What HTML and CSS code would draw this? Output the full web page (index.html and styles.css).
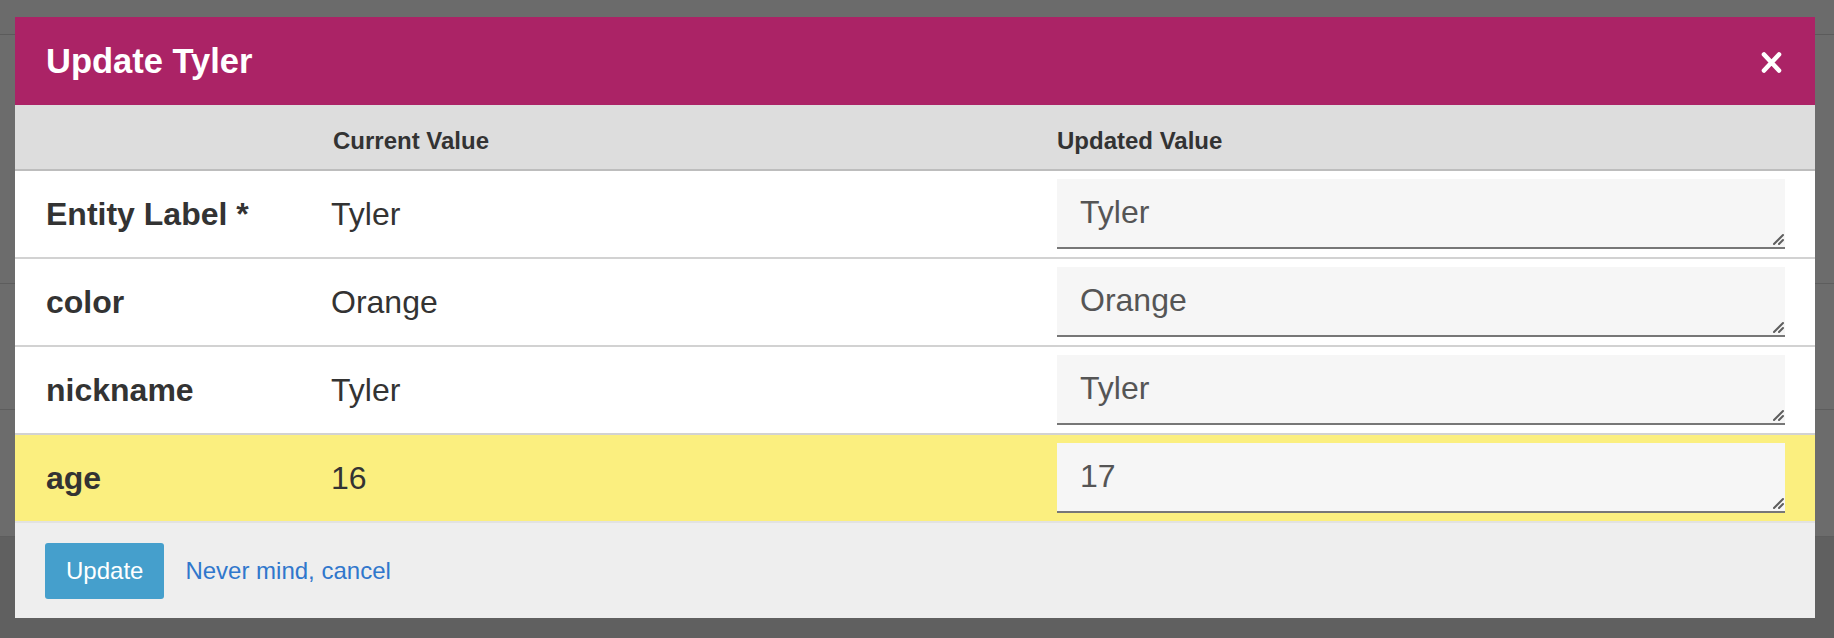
FILE: index.html
```html
<!DOCTYPE html>
<html lang="en">
<head>
<meta charset="utf-8">
<title>Update Tyler</title>
<link rel="stylesheet" href="styles.css">
</head>
<body>
<div class="page">
  <div class="page-top"></div>
  <div class="page-block b1"></div>
  <div class="page-block b2"></div>
  <div class="page-block b3"></div>
  <div class="page-foot"></div>
</div>
<div class="overlay">
  <div class="modal">
    <header class="modal-head">
      <h2 class="modal-title">Update Tyler</h2>
      <button class="close" aria-label="Close">
        <svg width="21" height="23" viewBox="0 0 21 23"><path d="M3 3.5 L18 19.5 M18 3.5 L3 19.5" stroke="#fff" stroke-width="4.6" stroke-linecap="round" fill="none"/></svg>
      </button>
    </header>
    <div class="grid thead">
      <span></span>
      <span>Current Value</span>
      <span>Updated Value</span>
    </div>
    <div class="grid row">
      <span class="label">Entity Label *</span>
      <span class="val">Tyler</span>
      <div class="field-wrap">
        <textarea class="field">Tyler</textarea>
        <svg class="grip" width="13" height="13" viewBox="0 0 13 13"><path d="M12 3 L3 12 M12 8 L8 12" stroke="#5e5e5e" stroke-width="2" stroke-linecap="round"/></svg>
      </div>
    </div>
    <div class="grid row">
      <span class="label">color</span>
      <span class="val">Orange</span>
      <div class="field-wrap">
        <textarea class="field">Orange</textarea>
        <svg class="grip" width="13" height="13" viewBox="0 0 13 13"><path d="M12 3 L3 12 M12 8 L8 12" stroke="#5e5e5e" stroke-width="2" stroke-linecap="round"/></svg>
      </div>
    </div>
    <div class="grid row">
      <span class="label">nickname</span>
      <span class="val">Tyler</span>
      <div class="field-wrap">
        <textarea class="field">Tyler</textarea>
        <svg class="grip" width="13" height="13" viewBox="0 0 13 13"><path d="M12 3 L3 12 M12 8 L8 12" stroke="#5e5e5e" stroke-width="2" stroke-linecap="round"/></svg>
      </div>
    </div>
    <div class="grid row changed">
      <span class="label">age</span>
      <span class="val">16</span>
      <div class="field-wrap">
        <textarea class="field">17</textarea>
        <svg class="grip" width="13" height="13" viewBox="0 0 13 13"><path d="M12 3 L3 12 M12 8 L8 12" stroke="#5e5e5e" stroke-width="2" stroke-linecap="round"/></svg>
      </div>
    </div>
    <footer class="modal-foot">
      <button class="btn">Update</button>
      <a class="cancel" href="#">Never mind, cancel</a>
    </footer>
  </div>
</div>
</body>
</html>
```

FILE: styles.css
```css
html, body {
  margin: 0;
  padding: 0;
  height: 100%;
  overflow: hidden;
}
body {
  font-family: "Liberation Sans", Arial, Helvetica, sans-serif;
  background: #ffffff;
}

/* underlying page (dimmed) */
.page {
  display: flex;
  flex-direction: column;
  height: 100%;
}
.page-top {
  height: 34px;
  background: #fdfdfd;
  border-bottom: 1px solid #d8d8d8;
}
.page-block {
  border-bottom: 1px solid #dcdcdc;
}
.b1 { height: 248px; }
.b2 { height: 125px; }
.b3 { height: 126px; }
.page-foot {
  flex: 1;
  background: #e2e2e2;
}

.overlay {
  position: fixed;
  inset: 0;
  background: rgba(0, 0, 0, 0.575);
}

.modal {
  position: absolute;
  left: 15px;
  top: 17px;
  width: 1800px;
  background: #ffffff;
}

.modal-head {
  height: 88px;
  box-sizing: border-box;
  padding: 0 33px 0 31px;
  background: #ab2366;
  display: flex;
  align-items: center;
  justify-content: space-between;
}
.modal-title {
  margin: 0;
  color: #ffffff;
  font-size: 34.5px;
  font-weight: bold;
}
.close {
  border: 0;
  background: transparent;
  padding: 0;
  display: flex;
  margin-top: 2px;
}

.grid {
  display: grid;
  grid-template-columns: 285px 726px 1fr;
  padding: 0 30px 0 31px;
  align-items: center;
}

.thead {
  height: 64px;
  background: #dddddd;
  border-bottom: 2px solid #bdbdbd;
  font-size: 24px;
  font-weight: bold;
  color: #333333;
}
.thead span {
  padding-top: 8px;
}
.thead span:nth-child(2) {
  padding-left: 2px;
}

.row {
  padding-top: 8px;
  padding-bottom: 8px;
  border-bottom: 2px solid #d2d2d2;
  color: #333333;
  font-size: 32px;
}
.row.changed {
  background: #fbef7f;
  border-bottom-color: #e2e2e2;
}
.label {
  font-weight: bold;
}

.field-wrap {
  position: relative;
}
.field {
  display: block;
  width: 100%;
  height: 70px;
  box-sizing: border-box;
  margin: 0;
  border: 0;
  border-bottom: 2px solid #777777;
  border-radius: 0;
  background: #f6f6f6;
  color: #555555;
  font-family: "Liberation Sans", Arial, Helvetica, sans-serif;
  font-size: 32px;
  line-height: 1.4;
  padding: 11px 23px;
  resize: none;
  overflow: hidden;
  outline: none;
}
.grip {
  position: absolute;
  right: 1px;
  bottom: 4px;
}

.modal-foot {
  background: #eeeeee;
  padding: 20px 31px 19px 30px;
  display: flex;
  align-items: center;
  gap: 21px;
}
.btn {
  height: 56px;
  padding: 0 21px;
  border: 0;
  border-radius: 3px;
  background: #459fcc;
  color: #ffffff;
  font-family: "Liberation Sans", Arial, Helvetica, sans-serif;
  font-size: 24px;
}
.cancel {
  color: #3077cc;
  font-size: 24px;
  text-decoration: none;
}
```
